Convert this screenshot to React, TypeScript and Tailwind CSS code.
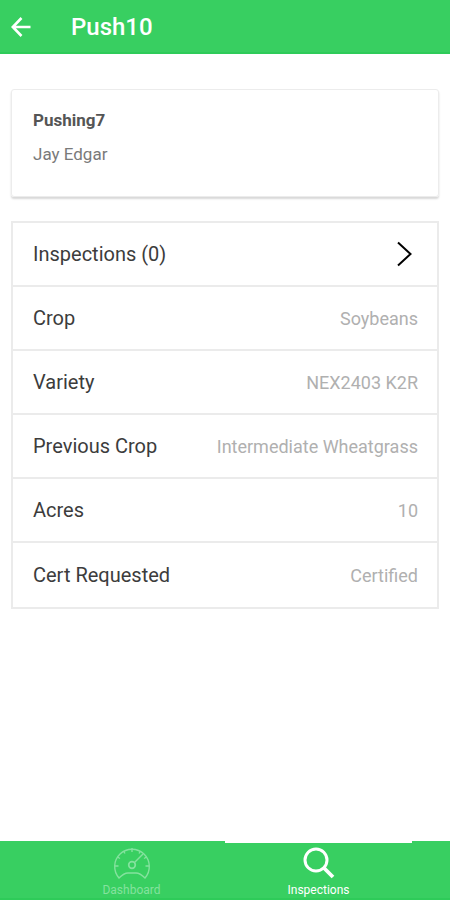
import clsx from "clsx";
import { ReactNode } from "react";

interface Detail {
  label: string;
  value: string;
}

interface TabProps {
  label: string;
  active?: boolean;
  children: ReactNode;
}

const details: Detail[] = [
  { label: "Crop", value: "Soybeans" },
  { label: "Variety", value: "NEX2403 K2R" },
  { label: "Previous Crop", value: "Intermediate Wheatgrass" },
  { label: "Acres", value: "10" },
  { label: "Cert Requested", value: "Certified" },
];

const BackIcon = () => (
  <svg width="20" height="20" viewBox="0 0 20 20" fill="none" stroke="currentColor" strokeWidth="2.6">
    <path d="M19.5 10H2M10.5 1 1.8 10l8.7 9" />
  </svg>
);

const ChevronIcon = () => (
  <svg width="15" height="26" viewBox="0 0 15 26" fill="none" stroke="currentColor" strokeWidth="2">
    <path d="M1 1.5 13.5 13 1 24.5" />
  </svg>
);

const GaugeIcon = () => (
  <svg width="38" height="34" viewBox="0 0 38 34" fill="none" stroke="currentColor" strokeWidth="1.4">
    <path d="M6 32A17.3 17.3 0 1 1 32 32C28.5 28.5 26 27 23 27H15C12 27 9.5 28.5 6 32Z" />
    <path d="M19 2v4M10.5 5l1.5 2.5M27.5 5l-1.5 2.5M4.500 11l2.500 1.500M33.500 11l-2.500 1.500M2 20h3.500M36 20h-3.500" />
    <path d="M21.5 16.5 30 8" />
    <circle cx="19" cy="19" r="3.3" strokeWidth="1.7" />
  </svg>
);

const SearchIcon = () => (
  <svg width="32" height="32" viewBox="0 0 32 32" fill="none" stroke="currentColor">
    <circle cx="13" cy="13" r="11" strokeWidth="3" />
    <path d="M20.5 20.5 30 30" strokeWidth="3.8" />
  </svg>
);

const Tab = ({ label, active, children }: TabProps) => (
  <button
    aria-current={active ? "page" : undefined}
    className={clsx(
      "flex flex-1 flex-col items-center border-t-2 text-xs leading-4",
      active ? "border-white text-white" : "border-transparent text-[#84e29e]"
    )}
  >
    <span className="flex h-10 items-center">{children}</span>
    {label}
  </button>
);

export default function App() {
  return (
    <div className="flex min-h-screen flex-col bg-white font-['Roboto',sans-serif]">
      <header className="flex h-[54px] items-center gap-10 border-b-2 border-[#2ecb59] bg-[#38cf61] px-[11px] pt-[2px] text-white">
        <button aria-label="Back">
          <BackIcon />
        </button>
        <h1 className="text-2xl leading-8 font-medium">Push10</h1>
      </header>

      <main className="flex grow flex-col gap-6 px-[11px] pt-[35px]">
        <section className="h-[108px] rounded-[3px] border border-[#ececec] px-[21px] pt-[18px] shadow-[0_2px_2px_#d8d8d8]">
          <h2 className="text-[17px] leading-6 font-bold text-[#555]">Pushing7</h2>
          <p className="mt-[10px] text-[17px] leading-6 text-[#7a7a7a]">Jay Edgar</p>
        </section>

        <section className="divide-y-2 divide-[#ebebeb] border-2 border-[#ebebeb]">
          <button className="flex h-16 w-full items-center justify-between pr-[25px] pl-5 text-[20px] text-[#3c3c3c]">
            Inspections (0)
            <span className="text-black">
              <ChevronIcon />
            </span>
          </button>
          <dl className="divide-y-2 divide-[#ebebeb]">
            {details.map(({ label, value }) => (
              <div key={label} className="flex h-16 items-center justify-between pr-[19px] pl-5">
                <dt className="text-[20px] text-[#3c3c3c]">{label}</dt>
                <dd className="text-[18px] text-[#b0b0b0]">{value}</dd>
              </div>
            ))}
          </dl>
        </section>
      </main>

      <nav className="flex h-[59px] border-b-2 border-[#2ecb59] bg-[#38cf61] px-[38px]">
        <Tab label="Dashboard">
          <GaugeIcon />
        </Tab>
        <Tab label="Inspections" active>
          <SearchIcon />
        </Tab>
      </nav>
    </div>
  );
}
